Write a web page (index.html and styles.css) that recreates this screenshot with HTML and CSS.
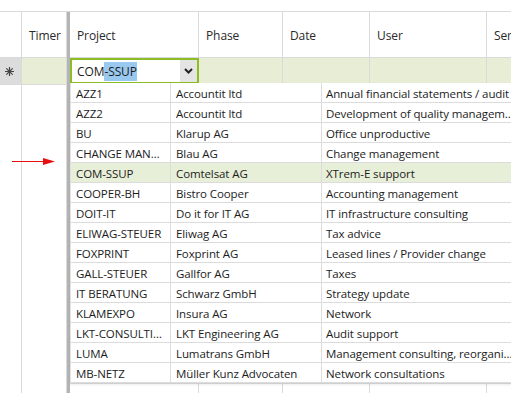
FILE: index.html
```html
<!DOCTYPE html>
<html lang="en">
<head>
  <meta charset="UTF-8">
  <meta name="viewport" content="width=device-width, initial-scale=1.0">
  <title>Time Entries</title>
  <link rel="stylesheet" href="styles.css">
</head>
<body>
  <div class="top-space"></div>

  <!-- Entry grid -->
  <div class="grid">
    <div class="cell head row-head"></div>
    <div class="cell head">Timer</div>
    <div class="splitter"></div>
    <div class="cell head">Project</div>
    <div class="cell head">Phase</div>
    <div class="cell head">Date</div>
    <div class="cell head">User</div>
    <div class="cell head">Service</div>

    <div class="cell new row-head">
      <svg class="star" width="9" height="9" viewBox="0 0 9 9">
        <path d="M4.5 0V9M0 4.5H9M1.3 1.3L7.7 7.7M7.7 1.3L1.3 7.7" stroke="#444" stroke-width="1.2" fill="none"/>
      </svg>
    </div>
    <div class="cell new"></div>
    <div class="cell new combo-cell">
      <div class="combo">
        <span class="combo-text">COM<span class="selected">-SSUP</span></span>
        <span class="combo-btn">
          <svg width="9" height="6" viewBox="0 0 9 6">
            <path d="M1 1L4.5 4.5L8 1" stroke="#222" stroke-width="2" fill="none"/>
          </svg>
        </span>
      </div>
    </div>
    <div class="cell new"></div>
    <div class="cell new"></div>
    <div class="cell new"></div>
    <div class="cell new"></div>

    <div class="cell fill row-head"></div>
    <div class="cell fill"></div>
    <div class="cell fill"></div>
    <div class="cell fill"></div>
    <div class="cell fill"></div>
    <div class="cell fill"></div>
    <div class="cell fill"></div>
  </div>

  <!-- Open project list -->
  <div class="dropdown" id="project-list"></div>

  <svg class="arrow" width="46" height="8" viewBox="0 0 46 8">
    <path d="M0 3.5H33" stroke="#e41010" stroke-width="1"/>
    <path d="M31 0L43 3.5L31 7Z" fill="#e41010"/>
  </svg>

  <script>
    const projects = [
      ["AZZ1", "Accountit ltd", "Annual financial statements / audit"],
      ["AZZ2", "Accountit ltd", "Development of quality management system"],
      ["BU", "Klarup AG", "Office unproductive"],
      ["CHANGE MANAGEMENT", "Blau AG", "Change management"],
      ["COM-SSUP", "Comtelsat AG", "XTrem-E support"],
      ["COOPER-BH", "Bistro Cooper", "Accounting management"],
      ["DOIT-IT", "Do it for IT AG", "IT infrastructure consulting"],
      ["ELIWAG-STEUER", "Eliwag AG", "Tax advice"],
      ["FOXPRINT", "Foxprint AG", "Leased lines / Provider change"],
      ["GALL-STEUER", "Gallfor AG", "Taxes"],
      ["IT BERATUNG", "Schwarz GmbH", "Strategy update"],
      ["KLAMEXPO", "Insura AG", "Network"],
      ["LKT-CONSULTING", "LKT Engineering AG", "Audit support"],
      ["LUMA", "Lumatrans GmbH", "Management consulting, reorganization"],
      ["MB-NETZ", "Müller Kunz Advocaten", "Network consultations"]
    ];

    const list = document.getElementById("project-list");
    projects.forEach(p => {
      const row = document.createElement("div");
      row.className = "option" + (p[0] === "COM-SSUP" ? " current" : "");
      row.innerHTML = p.map(t => `<span>${t}</span>`).join('');
      list.appendChild(row);
    });
  </script>
</body>
</html>
```

FILE: styles.css
```css
body {
  margin: 0;
  font-family: "Open Sans", "Noto Sans", sans-serif;
  font-size: 11.5px;
  letter-spacing: -0.1px;
  color: #1c1c1c;
  background: #fff;
  overflow: hidden;
  height: 393px;
}
.top-space {
  height: 11px;
}
.grid {
  display: grid;
  grid-template-columns: 22px 45px 3px 129px 84px 87px 117px 73px;
  grid-template-rows: 46px 27px 311px;
  width: 560px;
  border-top: 1px solid #dadada;
}
.cell {
  box-sizing: border-box;
  border-right: 1px solid #dadada;
  display: flex;
  align-items: center;
  white-space: nowrap;
  overflow: hidden;
}
.head {
  border-bottom: 1px solid #dadada;
  padding: 2px 0 0 7px;
  color: #2a2a2a;
  font-size: 12px;
}
.head.row-head {
  padding: 0;
}
.splitter {
  grid-row: 1 / 4;
  grid-column: 3;
  background: #b4b4b4;
}
.new {
  background: #e8eed5;
  border-bottom: 1px solid #dadada;
}
.new.row-head {
  background: #dcdcdc;
  justify-content: center;
  padding-right: 2px;
}
.combo-cell {
  border-right: none;
  align-items: stretch;
}
.combo {
  flex: 1;
  display: flex;
  align-items: center;
  border: 2px solid #8cbd24;
  background: #fff;
  font-size: 12px;
}
.combo-text {
  flex: 1;
  padding: 1px 0 0 5px;
}
.selected {
  background: #99c9ef;
  padding: 1px 0;
}
.combo-btn {
  width: 17px;
  align-self: stretch;
  background: #e4e4e4;
  display: flex;
  align-items: center;
  justify-content: center;
}
.fill {
  background: #fff;
}
.dropdown {
  position: absolute;
  top: 83px;
  left: 70px;
  width: 450px;
  background: #fff;
  border-left: 1px solid #e2e2e2;
  border-bottom: 1px solid #cfcfcf;
  box-shadow: 0 1px 2px rgba(0, 0, 0, 0.08);
}
.option {
  display: grid;
  grid-template-columns: 100px 151px 1fr;
  height: 20px;
  border-bottom: 1px solid #dcdcdc;
  box-sizing: border-box;
}
.option span {
  border-right: 1px solid #dcdcdc;
  padding: 2px 4px 0 5px;
  line-height: 17px;
  white-space: nowrap;
  overflow: hidden;
  text-overflow: ellipsis;
}
.option span:last-child {
  border-right: none;
  padding-left: 4px;
}
.option.current {
  background: #e8efd8;
}
.arrow {
  position: absolute;
  left: 12px;
  top: 158px;
}
```
